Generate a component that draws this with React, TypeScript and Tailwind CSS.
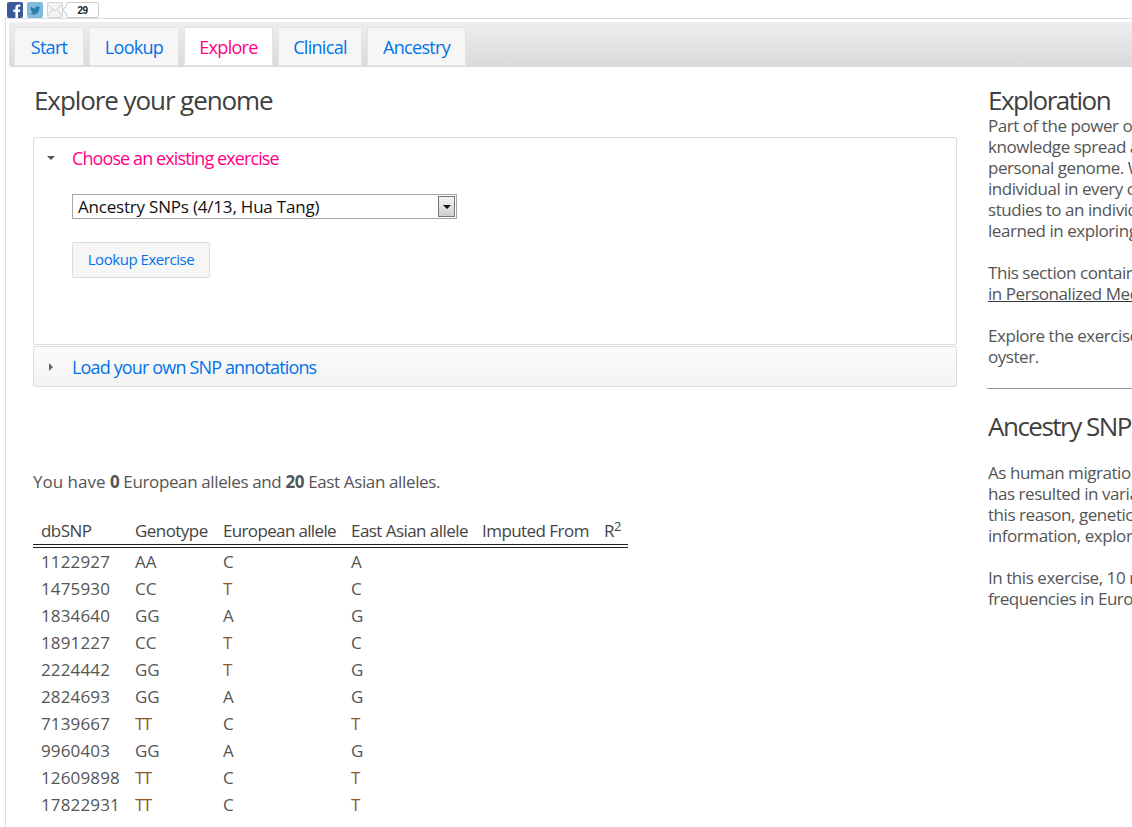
import React from 'react';

const font = "font-['Open_Sans','Noto_Sans',sans-serif]";

const tabs = [
  { label: 'Start', w: 'w-[70px]' },
  { label: 'Lookup', w: 'w-[90px]' },
  { label: 'Explore', w: 'w-[89px]', active: true },
  { label: 'Clinical', w: 'w-[84px]' },
  { label: 'Ancestry', w: 'w-[99px]' },
];

const rows = [
  ['1122927', 'AA', 'C', 'A', ''],
  ['1475930', 'CC', 'T', 'C', 'e'],
  ['1834640', 'GG', 'A', 'G', ''],
  ['1891227', 'CC', 'T', 'C', 'e'],
  ['2224442', 'GG', 'T', 'G', 'e'],
  ['2824693', 'GG', 'A', 'G', ''],
  ['7139667', 'TT', 'C', 'T', 'a'],
  ['9960403', 'GG', 'A', 'G', ''],
  ['12609898', 'TT', 'C', 'T', 'a'],
  ['17822931', 'TT', 'C', 'T', 'a'],
];

const Brown = ({ on, children }: { on: boolean; children: React.ReactNode }) => (
  <span className={on ? 'text-[#8a5a2a] tracking-[-1.5px]' : ''}>{children}</span>
);

const SocialBar = () => (
  <div className="flex items-start h-[18px] pl-[7px] pt-[2px] gap-[4px]">
    <svg width="16" height="16" viewBox="0 0 16 16">
      <rect width="16" height="16" rx="2" fill="#3b5998" />
      <path d="M11 16V10h2l.4-2.5H11V6c0-.8.3-1.2 1.2-1.2h1.2V2.6C13 2.5 12.300 2.500 11.500 2.500 9.600 2.500 8.400 3.600 8.400 5.700V7.500H6.300V10h2.100v6z" fill="#fff" />
    </svg>
    <svg width="16" height="16" viewBox="0 0 16 16">
      <rect width="16" height="16" rx="2" fill="#7fbcdc" />
      <path d="M13.500 5.200c-.4.200-.8.300-1.200.3.400-.3.800-.6.900-1.100-.4.200-.9.400-1.300.5a2.100 2.100 0 0 0-3.600 1.900C6.500 6.700 5 5.900 3.900 4.600c-.6 1-.3 2.200.6 2.800-.3 0-.6-.1-.9-.3 0 1 .7 1.900 1.700 2.100-.3.100-.6.100-.9 0 .3.800 1 1.400 1.900 1.400A4.200 4.200 0 0 1 3 11.500a6 6 0 0 0 9.300-5.400c.5-.2.900-.5 1.200-.9z" fill="#2a7fa8" />
    </svg>
    <svg width="16" height="16" viewBox="0 0 16 16">
      <rect x=".5" y=".5" width="15" height="15" rx="1.500" fill="#f4f4f4" stroke="#d4d4d4" />
      <path d="M1 3l7 6 7-6M1 14l5-6.500M15 14l-5-6.500" fill="none" stroke="#cfcfcf" />
    </svg>
    <div className="relative ml-[-1px] w-[33px] h-[16px] border border-[#cccccc] rounded-[2px] bg-white flex items-center justify-center text-[10px] font-bold text-[#222222] font-['Liberation_Sans',sans-serif] tracking-[-0.5px]">
      29
      <span className="absolute -left-[4px] top-[4px] w-[6px] h-[6px] rotate-45 bg-white border-l border-b border-[#cccccc]"></span>
    </div>
  </div>
);

export default function App() {
  return (
    <div className={`w-[1132px] h-[827px] overflow-hidden bg-white text-[#555555] ${font}`}>
      <SocialBar />
      <div className="ml-[5px] border-l border-t border-[#dddddd] h-[809px] pt-[3px] pl-[3px]">
        <div className="flex gap-[5px] h-[45px] pt-[5px] pl-[5px] rounded-l-[3px] bg-gradient-to-b from-[#eeeeee] to-[#dadada]">
          {tabs.map((t) => (
            <div
              key={t.label}
              className={`${t.w} h-[39px] pt-[2px] flex items-center justify-center text-[18px] tracking-[-0.7px] border border-[#e4e4e4] ${
                t.active ? 'bg-white text-[#ff0084]' : 'bg-[#f6f6f6] text-[#0073ea]'
              }`}
            >
              {t.label}
            </div>
          ))}
        </div>
        <div className="flex">
          <div className="w-[924px] ml-[24px] shrink-0">
            <h1 className="text-[26px] leading-[36px] mt-[15px] ml-[1px] text-[#404040] tracking-[-1.08px] font-normal">Explore your genome</h1>
            <div className="mt-[19px] h-[208px] border border-[#dddddd] rounded-[2px] pl-[38px] relative">
              <span className="absolute left-[13px] top-[18px] w-0 h-0 border-x-[4px] border-x-transparent border-t-[4px] border-t-[#555555]"></span>
              <div className="text-[18px] leading-[24px] mt-[8px] text-[#ff0084] tracking-[-0.9px]">Choose an existing exercise</div>
              <div className="mt-[24px] w-[385px] h-[25px] border border-[#a5a5ad] flex items-center justify-between pl-[5px] pr-px text-[17px] text-[#111111] tracking-[-0.2px]">
                <span>Ancestry SNPs (4/13, Hua Tang)</span>
                <span className="w-[17px] h-[21px] border border-[#777777] bg-gradient-to-b from-[#f4f4f4] to-[#cfcfcf] flex items-center justify-center">
                  <span className="w-0 h-0 border-x-[4px] border-x-transparent border-t-[4px] border-t-[#111111]"></span>
                </span>
              </div>
              <button className="block mt-[23px] w-[138px] h-[36px] pb-[2px] border border-[#dddddd] rounded-[2px] bg-[#f6f6f6] text-[#0073ea] text-[15px] tracking-[-0.45px]">
                Lookup Exercise
              </button>
            </div>
            <div className="mt-[1px] h-[41px] pt-[2px] border border-[#dddddd] rounded-[2px] pl-[38px] relative flex items-center bg-gradient-to-b from-[#fcfcfc] to-[#f3f3f3] text-[18px] text-[#0073ea] tracking-[-0.85px]">
              <span className="absolute left-[15px] top-[16px] w-0 h-0 border-y-[4px] border-y-transparent border-l-[4px] border-l-[#666666]"></span>
              Load your own SNP annotations
            </div>
            <p className="mt-[83px] text-[17px] leading-[24px] tracking-[-0.37px]">
              <span className="tracking-[0px]">You have </span><b>0</b> European alleles and <b>20</b> East Asian alleles.
            </p>
            <table className="mt-[21px] w-[595px] border-collapse text-[17px] table-fixed">
              <thead>
                <tr className="h-[30px] border-b-[4px] border-double border-[#222222] text-[#444444] tracking-[-0.55px]">
                  <th className="w-[102px] pt-[3px] pl-[8px] text-left font-normal">dbSNP</th>
                  <th className="w-[88px] pt-[3px] text-left font-normal">Genotype</th>
                  <th className="w-[128px] pt-[3px] text-left font-normal tracking-[-0.65px]">European allele</th>
                  <th className="w-[131px] pt-[3px] text-left font-normal">East Asian allele</th>
                  <th className="w-[122px] pt-[3px] text-left font-normal">Imputed From</th>
                  <th className="pt-[3px] text-left font-normal">R<sup className="text-[13px]">2</sup></th>
                </tr>
              </thead>
              <tbody>
                {rows.map((r) => (
                  <tr key={r[0]} className="h-[27px] leading-[27px]">
                    <td className="pl-[8px] tracking-[0.15px]">{r[0]}</td>
                    <td><Brown on={r[4] === 'a'}>{r[1]}</Brown></td>
                    <td><Brown on={r[4] === 'e'}>{r[2]}</Brown></td>
                    <td><Brown on={r[4] === 'a'}>{r[3]}</Brown></td>
                    <td></td>
                    <td></td>
                  </tr>
                ))}
              </tbody>
            </table>
          </div>
          <div className="ml-[31px] w-[400px] shrink-0 text-[17px] leading-[21px] tracking-[-0.45px] whitespace-nowrap">
            <h2 className="text-[26px] leading-[30px] mt-[18px] text-[#404040] tracking-[-1.5px] font-medium">Exploration</h2>
            <p>
              Part of the power of genetics lies in the<br />
              knowledge spread across the whole<br />
              personal genome. We are now able to<br />
              individual in every condition, and apply<br />
              studies to an individual's genome using<br />
              learned in exploring the genome.
            </p>
            <p className="mt-[21px]">
              This section contains exercises from<br />
              <span className="underline decoration-[#333333]">in Personalized Medicine</span>
            </p>
            <p className="mt-[21px]">
              Explore the exercises. The genome is your<br />
              oyster.
            </p>
            <div className="mt-[21px] -ml-[1px] border-t border-[#999999]"></div>
            <h2 className="text-[26px] leading-[30px] mt-[22px] text-[#404040] tracking-[-1.5px] font-medium">Ancestry SNPs</h2>
            <p className="mt-[21px]">
              As human migration took people across<br />
              has resulted in variation between groups.<br />
              this reason, genetic studies need ancestry<br />
              information, explore your own ancestry.
            </p>
            <p className="mt-[21px]">
              In this exercise, 10 markers with differing<br />
              frequencies in Europeans and East Asians.
            </p>
          </div>
        </div>
      </div>
    </div>
  );
}
